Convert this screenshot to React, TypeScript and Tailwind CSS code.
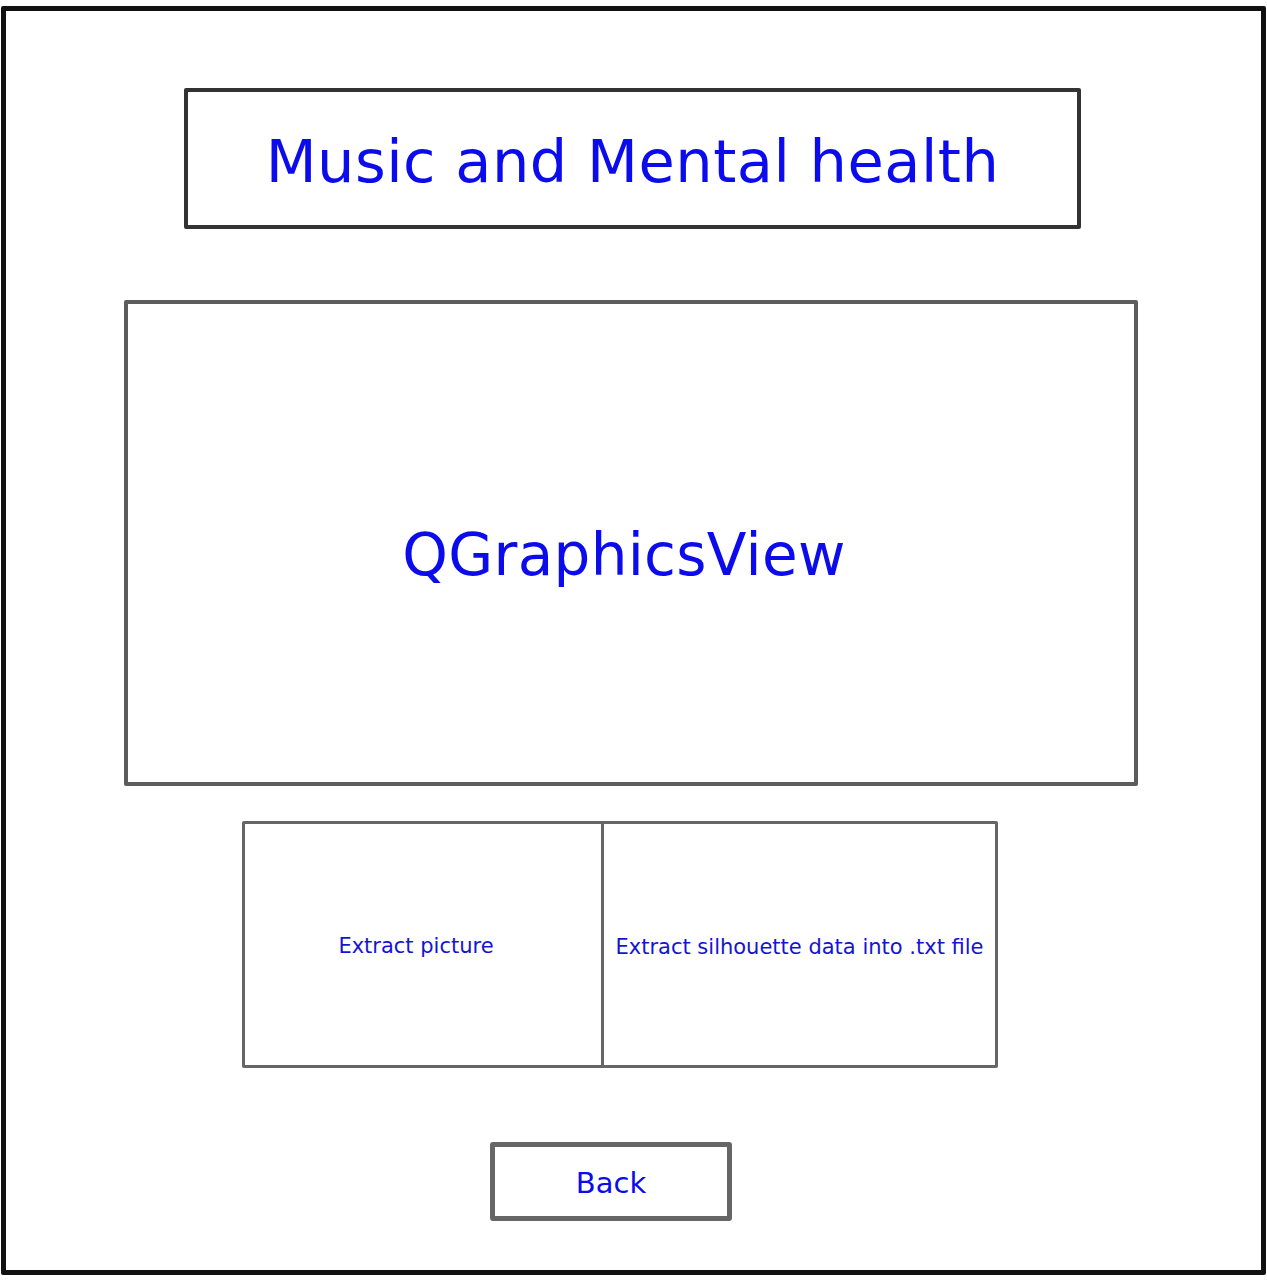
const FONT = "font-['DejaVu_Sans',sans-serif]";

export default function App() {
  return (
    <div className={`w-[1267px] h-[1280px] bg-white pt-[6px] pl-[1px] ${FONT}`}>
      <div className="w-[1265px] h-[1269px] border-[5px] border-[#111] rounded-[2px] flex flex-col items-start">
        <div className="mt-[77px] ml-[178px] w-[897px] h-[141px] border-4 border-[#333] rounded-[2px] flex items-center justify-center">
          <h1 className="text-[59px] text-[#0b0bec] leading-none tracking-[0.5px] mt-[5px]">Music and Mental health</h1>
        </div>

        <div className="mt-[71px] ml-[118px] w-[1014px] h-[486px] border-4 border-[#5c5c5c] rounded-[2px] flex items-center justify-center">
          <span className="text-[58px] text-[#0b0bec] leading-none mt-[24px] mr-[14px] tracking-[0.3px]">QGraphicsView</span>
        </div>

        <div className="mt-[35px] ml-[236px] w-[756px] h-[247px] border-[3px] border-[#666] rounded-[2px] flex">
          <div className="w-[359px] border-r-[3px] border-[#666] flex items-center justify-center">
            <span className="text-[21px] text-[#1414d2] mt-[4px] mr-[14px]">Extract picture</span>
          </div>
          <div className="flex-1 flex items-center justify-center">
            <span className="text-[21px] text-[#1414d2] mt-[6px]">Extract silhouette data into .txt file</span>
          </div>
        </div>

        <button className="mt-[74px] ml-[484px] w-[242px] h-[79px] border-[5px] border-[#666] rounded-[3px] flex items-center justify-center">
          <span className="text-[29px] text-[#0b0bec] leading-none mt-[3px]">Back</span>
        </button>
      </div>
    </div>
  );
}
